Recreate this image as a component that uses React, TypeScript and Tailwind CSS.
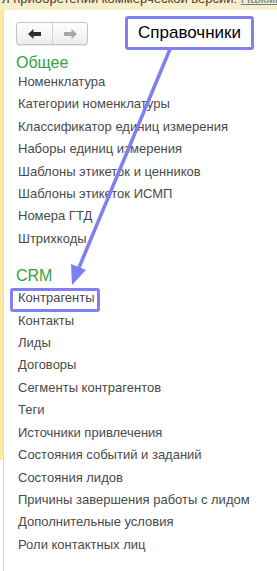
import React from 'react';

const general = [
  'Номенклатура',
  'Категории номенклатуры',
  'Классификатор единиц измерения',
  'Наборы единиц измерения',
  'Шаблоны этикеток и ценников',
  'Шаблоны этикеток ИСМП',
  'Номера ГТД',
  'Штрихкоды',
];

const crm = [
  'Контрагенты',
  'Контакты',
  'Лиды',
  'Договоры',
  'Сегменты контрагентов',
  'Теги',
  'Источники привлечения',
  'Состояния событий и заданий',
  'Состояния лидов',
  'Причины завершения работы с лидом',
  'Дополнительные условия',
  'Роли контактных лиц',
];

const NavButtons: React.FC = () => (
  <div className="flex h-[23px] w-[72px] rounded-[3px] border border-[#c4c4c4] bg-gradient-to-b from-white to-[#ececec] shadow-[0_1px_1px_rgba(0,0,0,0.08)]">
    <div className="flex w-[36px] items-center justify-center border-r border-[#d0d0d0]">
      <svg width="13" height="10" viewBox="0 0 13 10">
        <path d="M0 5 L5.5 0 L5.5 3 L13 3 L13 7 L5.5 7 L5.5 10 Z" fill="#2e2e2e" />
      </svg>
    </div>
    <div className="flex flex-1 items-center justify-center">
      <svg width="13" height="10" viewBox="0 0 13 10">
        <path d="M13 5 L7.5 0 L7.5 3 L0 3 L0 7 L7.5 7 L7.5 10 Z" fill="#a8a8a8" />
      </svg>
    </div>
  </div>
);

const App: React.FC = () => {
  return (
    <div className="relative h-[571px] w-[277px] overflow-hidden bg-white font-['Liberation_Sans',Arial,sans-serif]">
      {/* clipped info bar */}
      <div className="h-[10px] overflow-hidden whitespace-nowrap bg-[#f6edc9] text-[13px] leading-[16px] text-[#4a4030]">
        <div className="-mt-[9px] pl-[2px]">
          л приобретении коммерческой версии:{' '}
          <span className="text-[#6d7a8a] underline">Нажмите здесь</span>
        </div>
      </div>

      <div className="flex">
        <div className="flex w-[4px] flex-col">
          <div className="h-[450px] border-r border-[#efe2a8] bg-[#fce9a0]" />
          <div className="h-[120px] border-r border-[#d6d6d6]" />
        </div>

        <div className="flex-1 pl-[12px] text-[13px] text-[#4a4a4a]">
          <div className="mt-[12px]">
            <NavButtons />
          </div>

          <div className="mt-[9px] text-[16px] leading-[18px] text-[#33a23c]">Общее</div>
          <div className="-mt-[1px] pl-[2px]">
            {general.map((t) => (
              <div key={t} className="leading-[22.4px] whitespace-nowrap">
                {t}
              </div>
            ))}
          </div>

          <div className="mt-[17px] text-[16px] leading-[18px] text-[#33a23c]">CRM</div>
          <div className="mt-[2px] pl-[2px]">
            {crm.map((t) => (
              <div key={t} className="leading-[22.4px] whitespace-nowrap">
                {t}
              </div>
            ))}
          </div>
        </div>
      </div>

      {/* annotation: callout */}
      <div className="absolute left-[125px] top-[16px] flex h-[34px] w-[129px] items-center justify-center rounded-[3px] border-[3px] border-[#8080f2] bg-white text-[17px] text-black">
        Справочники
      </div>

      {/* annotation: highlight box */}
      <div className="absolute left-[10px] top-[288px] h-[24px] w-[90px] rounded-[3px] border-[3px] border-[#8080f2]" />

      {/* annotation: arrow */}
      <svg className="pointer-events-none absolute left-0 top-0" width="277" height="571">
        <line x1="170" y1="49" x2="78" y2="270" stroke="#7f7ff2" strokeWidth="3.5" />
        <path d="M72 285 L71 264 L86 270 Z" fill="#7f7ff2" />
      </svg>
    </div>
  );
};

export default App;
